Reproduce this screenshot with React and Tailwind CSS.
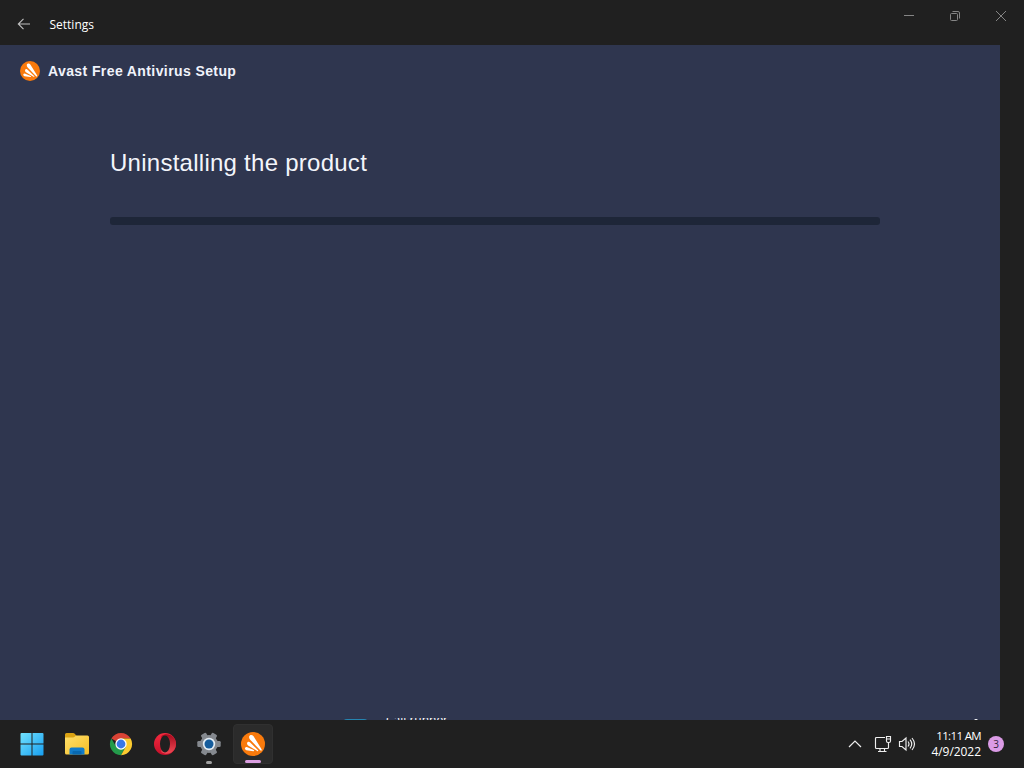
import React from "react";

const UI = "font-['Open_Sans','Noto_Sans',sans-serif]";
const ARIAL = "font-['Liberation_Sans',Arial,sans-serif]";

function AvastLogo({ className }) {
  return (
    <svg viewBox="0 0 24 24" className={className}>
      <circle cx="12" cy="12" r="12" fill="#f97a0c" />
      <g fill="#fff">
        <path d="M8.1 4.8C8.3 2.8 11 2.3 12.4 4.1L20.6 17.3C21.1 18.5 20.1 19.2 19.3 18.3L9.2 7.7C8.4 6.8 8 5.9 8.1 4.8Z" />
        <path d="M6.1 10.9C6.5 9.5 8.1 9.3 9.2 10.5L16.9 18C17.6 18.8 17 19.5 16.2 19L7.1 13.4C6.2 12.8 5.9 11.9 6.1 10.9Z" />
        <path d="M4 16C4.4 15 5.4 14.8 6.4 15.2L12.7 18.1C13.5 18.6 13.2 19.4 12.4 19.3L5.3 18.2C4.2 17.9 3.8 17 4 16Z" />
      </g>
    </svg>
  );
}

function TitleBar() {
  return (
    <header className="flex h-[45px] shrink-0 justify-between">
      <div className="flex items-center pl-[17px] pt-[3px]">
        <svg viewBox="0 0 14 14" className="h-3.5 w-3.5" fill="none" stroke="#c0c0c0" strokeWidth="1.1">
          <path d="M13 7H1.5M6.5 1.8L1.3 7L6.5 12.2" />
        </svg>
        <span className={`${UI} ml-[18.5px] pt-0.5 text-[12px] leading-4 text-white`}>Settings</span>
      </div>
      <div className="flex h-8 items-center gap-[34px] pr-[17px]">
        <svg viewBox="0 0 12 12" className="h-3 w-3" stroke="#858585" fill="none">
          <path d="M1 5.5H11" />
        </svg>
        <svg viewBox="0 0 12 12" className="h-3 w-3" stroke="#858585" fill="none">
          <rect x="1.5" y="3.5" width="7" height="7" rx="1" />
          <path d="M3.5 1.5H9Q10.5 1.5 10.5 3V8.5" />
        </svg>
        <svg viewBox="0 0 12 12" className="h-3 w-3" stroke="#858585" fill="none">
          <path d="M1 1L11 11M11 1L1 11" />
        </svg>
      </div>
    </header>
  );
}

function SetupWindow() {
  return (
    <main className={`${ARIAL} flex w-[1000px] grow flex-col bg-[#2f364f]`}>
      <div className="mt-4 flex h-5 items-center gap-2 pl-5">
        <AvastLogo className="h-5 w-5" />
        <h1 className="whitespace-nowrap text-[14px] font-bold leading-5 tracking-[0.4px] text-[#f0f3fb]">Avast Free Antivirus Setup</h1>
      </div>
      <section className="mt-[66px] px-[110px]">
        <h2 className="text-[24px] leading-8 tracking-[0.26px] text-[#f3f5fb]">Uninstalling the product</h2>
        <div className="mt-[38px] h-2 w-[770px] rounded-[3px] bg-[#1e2638]" />
      </section>
      <div className="mt-auto flex h-[2px] items-start overflow-hidden pl-[343px]">
        <div className="mt-px h-3 w-[25px] rounded-t-[4px] bg-[#2585b1]" />
        <span className={`${UI} -mt-[6px] ml-[18px] w-[62px] whitespace-nowrap text-[12px] leading-4 text-white`}>Call runner</span>
        <span className="ml-[526px] mt-px h-1 w-1 rounded-full bg-white" />
      </div>
    </main>
  );
}

function WindowsIcon() {
  return (
    <svg viewBox="0 0 24 24" className="h-6 w-6">
      <defs>
        <linearGradient id="win" x1="0" y1="0" x2="24" y2="24" gradientUnits="userSpaceOnUse">
          <stop stopColor="#75e4ff" />
          <stop offset="1" stopColor="#159df0" />
        </linearGradient>
      </defs>
      <path fill="url(#win)" d="M1.5 1H11.5V11.5H.5V2Q.5 1 1.5 1ZM12.5 1H22.5Q23.5 1 23.5 2V11.5H12.5ZM.5 12.5H11.5V23.5H1.5Q.5 23.5.5 22.5ZM12.5 12.5H23.5V22.5Q23.5 23.5 22.5 23.5H12.5Z" />
    </svg>
  );
}

function FolderIcon() {
  return (
    <svg viewBox="0 0 26 24" className="h-6 w-[26px]">
      <defs>
        <linearGradient id="folder" x2="1" y2="1">
          <stop stopColor="#ffe06b" />
          <stop offset="1" stopColor="#f5bd25" />
        </linearGradient>
      </defs>
      <path d="M1 6V2.5Q1 1 2.5 1H9Q10 1 11 2L12.5 4H15V8H1Z" fill="#dba313" />
      <path d="M1 5.5H9Q10 5.5 11 4.5L12 3.5H23.5Q25 3.5 25 5V21Q25 22.5 23.5 22.5H2.5Q1 22.5 1 21Z" fill="url(#folder)" />
      <path d="M5.5 22.5V17.5Q5.5 15.5 7.5 15.5H18.5Q20.5 15.5 20.5 17.5V22.5Z" fill="#117bc9" />
      <path d="M8.5 22.5V20Q8.5 19 9.5 19H16.5Q17.5 19 17.5 20V22.5Z" fill="#0868b0" />
    </svg>
  );
}

function ChromeIcon() {
  return (
    <svg viewBox="0 0 24 24" className="h-6 w-6">
      <path d="M12 12L2.35 6.45A11.15 11.15 0 0 1 21.65 6.45L12 6.5Z" fill="#d94335" />
      <path d="M2.35 6.45A11.15 11.15 0 0 0 12 23.15L16.8 14.8L12 12L7.2 14.8Z" fill="#249b4b" />
      <path d="M12 23.15A11.15 11.15 0 0 0 21.65 6.45H12L16.8 14.8Z" fill="#fccb2f" />
      <circle cx="12" cy="12" r="5.7" fill="#fff" />
      <circle cx="12" cy="12" r="4.4" fill="#3978e8" />
    </svg>
  );
}

function OperaIcon() {
  return (
    <svg viewBox="0 0 24 24" className="h-6 w-6">
      <defs>
        <linearGradient id="opera" x2="0" y2="1">
          <stop stopColor="#f52a3e" />
          <stop offset="1" stopColor="#c50f2a" />
        </linearGradient>
        <linearGradient id="operaEdge" x2="0" y2="1">
          <stop stopColor="#a5091c" />
          <stop offset="1" stopColor="#f14b56" />
        </linearGradient>
      </defs>
      <circle cx="12" cy="12" r="11" fill="url(#opera)" />
      <path d="M8.3 4C14.5-.5 22.9 4 22.9 12S14.5 24.5 8.3 20Z" fill="url(#operaEdge)" />
      <ellipse cx="12" cy="12" rx="5" ry="8.4" fill="#202020" />
    </svg>
  );
}

function GearIcon() {
  return (
    <svg viewBox="0 0 24 24" className="h-6 w-6">
      <g fill="#85898f">
        <circle cx="12" cy="12" r="9" />
        {[30, 90, 150, 210, 270, 330].map((angle) => (
          <rect key={angle} x="9" y="0.3" width="6" height="7" rx="1.3" transform={`rotate(${angle} 12 12)`} />
        ))}
      </g>
      <circle cx="12" cy="12" r="6.2" fill="#e4edf4" />
      <circle cx="12" cy="12" r="4.5" fill="#155c9c" />
    </svg>
  );
}

function Tray() {
  return (
    <div className="flex h-12 items-center pr-5">
      <svg viewBox="0 0 14 10" className="h-2.5 w-3.5" fill="none" stroke="#eee" strokeWidth="1.2">
        <path d="M1 8L7 2L13 8" />
      </svg>
      <svg viewBox="0 0 18 18" className="ml-3 h-[18px] w-[18px]" fill="none" stroke="#eee" strokeWidth="1.15">
        <path d="M11 2.5H2.5Q1.5 2.5 1.5 3.5V12.5Q1.5 13.5 2.5 13.5H13.5Q14.5 13.5 14.5 12.5V7.5M6 13.5V16.5M10.5 13.5V16.5M4 16.5H12.5M12.5 1.5H16.5V6Q16.5 7.5 15 7.5H14Q12.5 7.5 12.5 6ZM12.5 4H16.5" />
      </svg>
      <svg viewBox="0 0 18 18" className="ml-[6px] h-[18px] w-[18px]" fill="none" stroke="#eee" strokeWidth="1.15">
        <path d="M1.5 6.5H4L8 3V15L4 11.5H1.5ZM10 6.5Q12 9 10 11.5M12 4.7Q15.5 9 12 13.3M14 3Q19 9 14 15" />
      </svg>
      <div className={`${UI} ml-[7px] flex w-[58px] flex-col items-end text-white`}>
        <p className="whitespace-nowrap text-[11.5px] leading-4 tracking-[-0.65px]">11:11 AM</p>
        <p className="whitespace-nowrap text-[12px] leading-4 tracking-[-0.05px]">4/9/2022</p>
      </div>
      <span className={`${UI} ml-[7px] flex h-4 w-4 items-center justify-center rounded-full bg-[#db9be6] text-[10px] leading-4 text-[#30233b]`}>3</span>
    </div>
  );
}

function Taskbar() {
  return (
    <footer className="flex h-12 shrink-0 items-start justify-between">
      <div className="flex h-12 items-center pl-3">
        <div className="flex w-10 justify-center"><WindowsIcon /></div>
        <div className="ml-1 flex w-[42px] justify-center"><FolderIcon /></div>
        <div className="ml-[3px] flex w-10 justify-center"><ChromeIcon /></div>
        <div className="ml-1 flex w-10 justify-center"><OperaIcon /></div>
        <div className="ml-1 flex h-10 w-10 flex-col items-center justify-end">
          <GearIcon />
          <span className="mt-[5px] h-[3px] w-[6px] rounded-full bg-[#a0a0a0]" />
        </div>
        <div className="ml-1 flex h-10 w-10 flex-col items-center justify-end rounded-[4px] border border-[#303030] bg-[#2b2b2b]">
          <AvastLogo className="h-6 w-6" />
          <span className="mt-1 h-[3px] w-4 rounded-full bg-[#db9fe1]" />
        </div>
      </div>
      <Tray />
    </footer>
  );
}

export default function App() {
  return (
    <div className="flex h-[768px] w-[1024px] flex-col overflow-hidden bg-[#202020]">
      <TitleBar />
      <SetupWindow />
      <Taskbar />
    </div>
  );
}
